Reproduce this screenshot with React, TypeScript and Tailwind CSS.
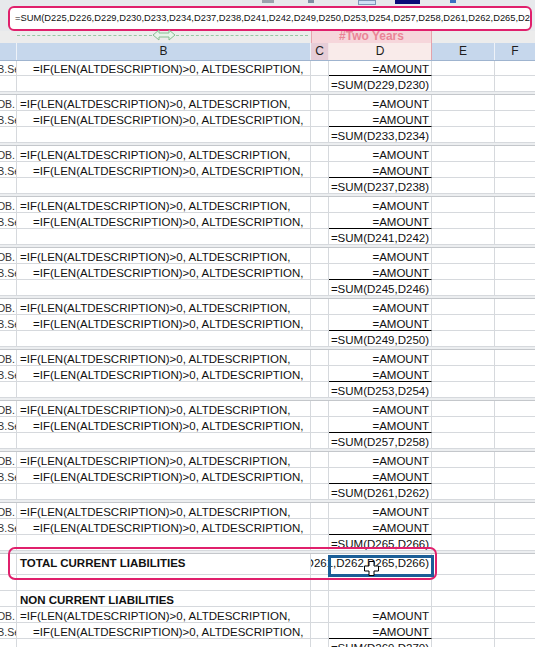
import React from 'react';

const IF_TEXT = '=IF(LEN(ALTDESCRIPTION)>0, ALTDESCRIPTION,';
const FORMULA =
  '=SUM(D225,D226,D229,D230,D233,D234,D237,D238,D241,D242,D249,D250,D253,D254,D257,D258,D261,D262,D265,D266)';

interface RowProps {
  a?: string;
  b?: string;
  indent?: boolean;
  bold?: boolean;
  d?: string;
  line?: boolean;
  h?: string;
}

const cell = 'border-r border-b border-[#d6d9dd]';

// one spreadsheet row: columns A..F
const Row: React.FC<RowProps> = ({ a, b, indent, bold, d, line, h = 'h-[16px]' }) => (
  <div className={`flex ${h}`}>
    <div className={`w-[17px] ${cell} flex items-end justify-end overflow-hidden whitespace-nowrap text-[10.5px] leading-[12px] text-[#333]`}>
      {a && <span className={a === 'B.Se' ? '-mr-[4px]' : 'pr-px'}>{a}</span>}
    </div>
    <div
      className={`w-[294px] ${cell} flex items-end whitespace-nowrap leading-[12px] ${indent ? 'pl-[16px]' : 'pl-[3px]'} ${bold ? 'font-bold' : ''}`}
    >
      {b}
    </div>
    <div className={`w-[18px] ${cell}`} />
    <div
      className={`w-[103px] border-r border-r-[#d6d9dd] border-b ${line ? 'border-b-black' : 'border-b-[#d6d9dd]'} flex items-end justify-end pr-[2px] leading-[12px] whitespace-nowrap`}
    >
      {d}
    </div>
    <div className={`w-[63px] ${cell}`} />
    <div className="w-[40px] border-b border-[#d6d9dd]" />
  </div>
);

const Sep = () => <div className="h-[3px] bg-[#eceef0] border-b border-[#c4c7cb]" />;

const Group: React.FC<{ n: number }> = ({ n }) => (
  <>
    <Row a="OB." b={IF_TEXT} d="=AMOUNT" />
    <Row a="B.Se" b={IF_TEXT} indent d="=AMOUNT" line />
    <Row d={`=SUM(D${n},D${n + 1})`} />
    <Sep />
  </>
);

const App: React.FC = () => {
  const groups = [233, 237, 241, 245, 249, 253, 257, 261, 265];

  return (
    <div className="relative w-[535px] h-[647px] overflow-hidden bg-white text-[11.5px] text-[#111] font-['Liberation_Sans',Arial,sans-serif]">
      {/* toolbar edge + formula bar */}
      <div className="bg-[#e7e9ec]">
        <div className="flex h-[6px] items-start">
          <span className="ml-[262px] w-[12px] h-[3px] bg-[#9aa3ad]" />
          <span className="ml-[34px] w-[6px] h-[3px] bg-[#7f8fa3]" />
          <span className="ml-[44px] w-[18px] h-[5px] bg-[#cfe0f5] border border-[#7d96b8]" />
          <span className="ml-[19px] w-[25px] h-[4px] bg-[#0b0b78]" />
          <span className="ml-[30px] w-[6px] h-[3px] bg-[#3a6fc1]" />
        </div>
        <div className="pl-[8px] pr-[3px]">
          <div className="h-[25px] flex items-center overflow-hidden whitespace-nowrap rounded-[6px] border-2 border-[#e0206c] bg-white pl-[5px] text-[9.35px] text-[#111]">
            {FORMULA}
          </div>
        </div>
      </div>

      {/* outline strip with #Two Years label */}
      <div className="flex h-[12px] bg-[#ececec]">
        <div className="w-[311px] h-[8px] flex items-center pl-[17px]">
          <div className="w-[135px] border-t border-dashed border-[#97c7a3]" />
          <svg width="24" height="12" viewBox="0 0 24 12">
            <path d="M1 6 L7 1 V4 H17 V1 L23 6 L17 11 V8 H7 V11 Z" fill="#e8f4ea" stroke="#86bf92" strokeWidth="1" />
          </svg>
          <div className="flex-1 border-t border-dashed border-[#97c7a3] mr-[3px]" />
        </div>
        <div className="w-[121px] bg-[#f6d6db] border-x border-[#e9a3ad] text-center">
          <div className="-mt-[1px] text-[12px] leading-[12px] font-bold text-[#ea8597]">#Two Years</div>
        </div>
        <div className="flex-1" />
      </div>

      {/* column header */}
      <div className="flex h-[18px] bg-[#c6d7ec] border-b border-[#9fb4cf] text-[12px] text-[#1d1d1d] leading-[17px]">
        <div className="w-[17px] border-r border-[#eef2f8]" />
        <div className="w-[294px] border-r border-[#eef2f8] text-center">B</div>
        <div className="w-[18px] bg-[#e6cdd7] border-r border-[#f3e4e8] text-center">C</div>
        <div className="w-[103px] bg-[#f9ebea] border-r border-[#e3a3ab] text-center">D</div>
        <div className="w-[63px] border-r border-[#eef2f8] text-center">E</div>
        <div className="w-[40px] text-center">F</div>
      </div>

      {/* sheet body */}
      <div>
        <Row a="B.Se" b={IF_TEXT} indent d="=AMOUNT" line h="h-[15px]" />
        <Row d="=SUM(D229,D230)" />
        <Sep />
        {groups.map((n) => (
          <Group key={n} n={n} />
        ))}

        {/* total row: formula overflows left out of D */}
        <div className="flex h-[21px]">
          <div className={`w-[17px] ${cell}`} />
          <div className={`w-[294px] ${cell} flex items-end pb-[4px] pl-[3px] font-bold leading-[14px] whitespace-nowrap`}>
            TOTAL CURRENT LIABILITIES
          </div>
          <div className={`w-[121px] ${cell} flex items-end justify-end overflow-hidden pb-[4px] pr-[2px] leading-[14px] whitespace-nowrap`}>
            <span>D261,D262,D265,D266)</span>
          </div>
          <div className={`w-[63px] ${cell}`} />
          <div className="w-[40px] border-b border-[#d6d9dd]" />
        </div>
        <Row />
        <Row b="NON CURRENT LIABILITIES" bold />
        <Row a="OB." b={IF_TEXT} d="=AMOUNT" />
        <Row a="B.Se" b={IF_TEXT} indent d="=AMOUNT" line />
        <Row d="=SUM(D269,D270)" />
      </div>

      {/* annotation: highlighted total row */}
      <div className="absolute left-[8px] top-[547px] w-[429px] h-[33px] rounded-[7px] border-2 border-[#e0206c]" />
      {/* active cell */}
      <div className="absolute left-[328px] top-[555px] w-[106px] h-[22px] border-[3px] border-[#1b5e97]" />
      {/* mouse cursor */}
      <svg className="absolute left-[364px] top-[561px]" width="15" height="15" viewBox="0 0 15 15">
        <path
          d="M5 0.5 H10 V5 H14.5 V10 H10 V14.5 H5 V10 H0.5 V5 H5 Z"
          fill="#ffffff"
          stroke="#000000"
          strokeWidth="1"
        />
      </svg>
    </div>
  );
};

export default App;
